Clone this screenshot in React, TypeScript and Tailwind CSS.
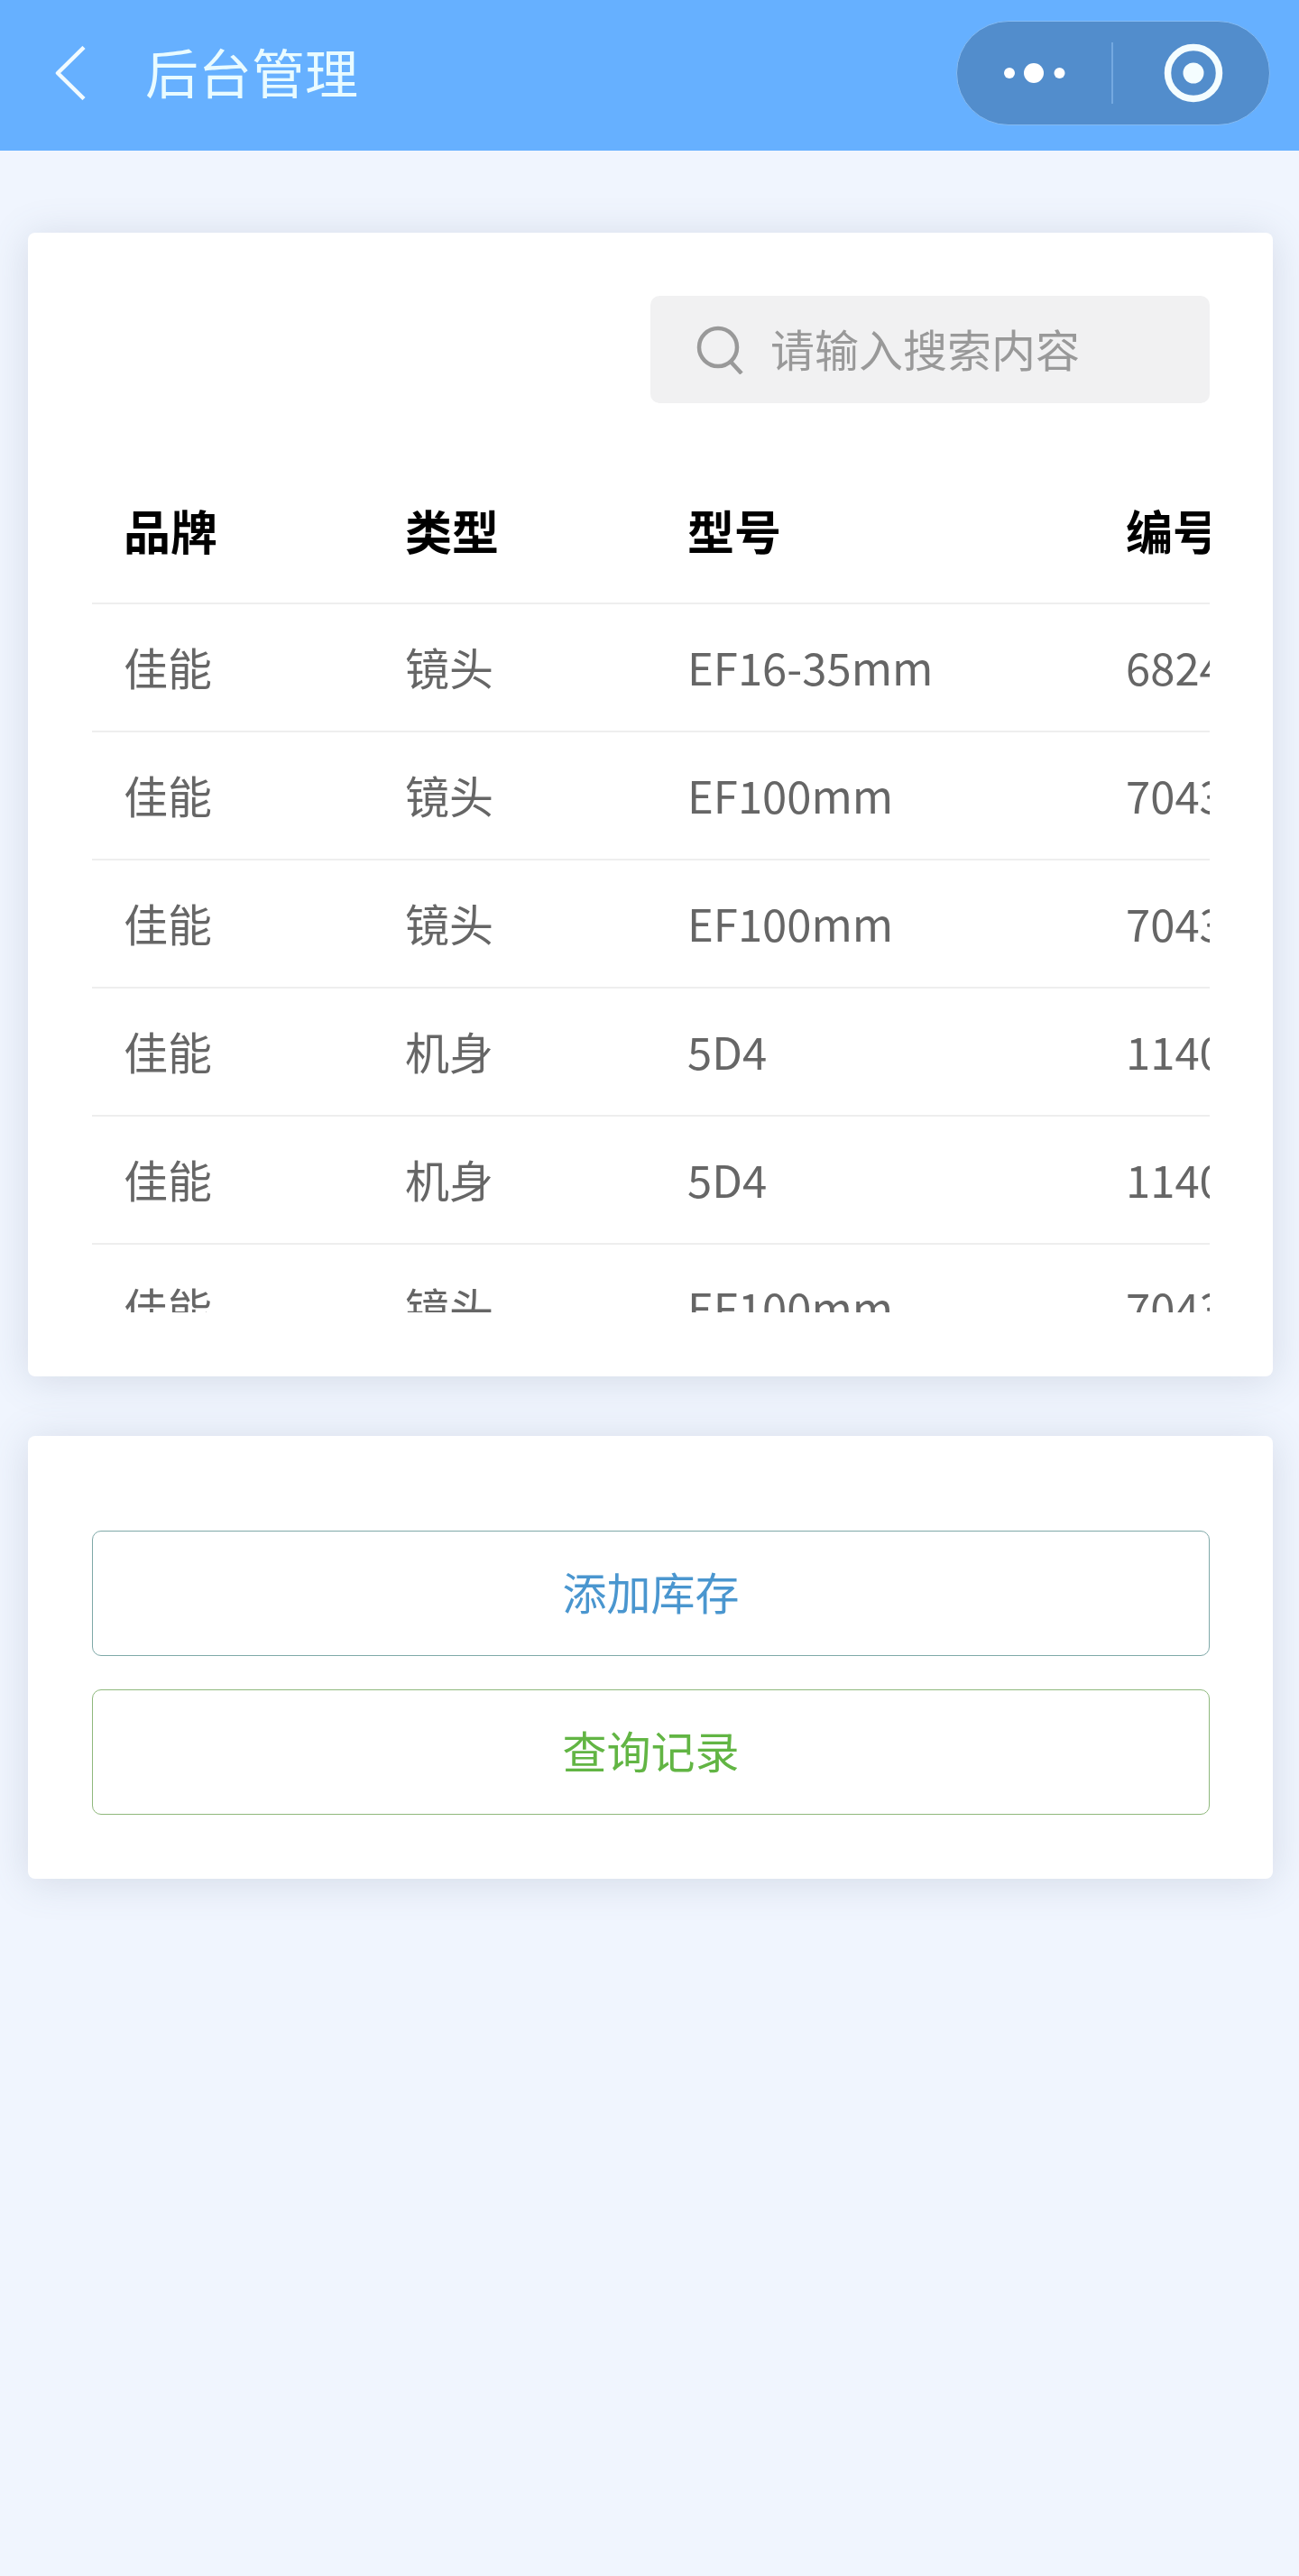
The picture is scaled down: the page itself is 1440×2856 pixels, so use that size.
import React from 'react'

const rows = [
  { brand: '佳能', type: '镜头', model: 'EF16-35mm', code: '682400' },
  { brand: '佳能', type: '镜头', model: 'EF100mm', code: '704300' },
  { brand: '佳能', type: '镜头', model: 'EF100mm', code: '704300' },
  { brand: '佳能', type: '机身', model: '5D4', code: '114000' },
  { brand: '佳能', type: '机身', model: '5D4', code: '114000' },
  { brand: '佳能', type: '镜头', model: 'EF100mm', code: '704300' },
]

const cardClass =
  'ml-[31px] mr-[29px] rounded-[8px] bg-white shadow-[0_4px_44px_rgba(90,105,125,0.19)]'

const Row = ({ cells, head }: { cells: string[]; head?: boolean }) => (
  <div
    className={`flex h-[142px] shrink-0 items-center border-b-[2.5px] border-[#eeeeee] pl-[35px] whitespace-nowrap ${
      head ? 'pb-[20px] text-[52px] font-bold text-black' : 'pb-[2px] text-[49px] text-[#666666]'
    }`}
  >
    <div className="w-[312px] shrink-0">{cells[0]}</div>
    <div className="w-[313px] shrink-0">{cells[1]}</div>
    <div className="w-[486px] shrink-0">{cells[2]}</div>
    <div className="shrink-0">{cells[3]}</div>
  </div>
)

export default function App() {
  return (
    <div className="h-[2856px] w-[1440px] overflow-hidden bg-[#f0f5fe] font-['Noto_Sans_CJK_SC',sans-serif]">
      {/* Nav bar */}
      <div className="flex h-[167px] items-center justify-between bg-[#66b0ff] pr-[32px] pb-[5px] pl-[61px]">
        <div className="flex items-center">
          <svg width="34" height="60" viewBox="0 0 34 60" fill="none">
            <path d="M32 1.5 3 30l29 28.5" stroke="#f2fbff" strokeWidth="4.5" strokeLinejoin="round" />
          </svg>
          <span className="ml-[66px] pb-[5px] text-[59px] leading-none text-[#e9fbff]">后台管理</span>
        </div>

        {/* Capsule */}
        <div className="flex h-[116px] w-[348px] items-center rounded-full border-[1.5px] border-[#84baf2] bg-[#528dcc]">
          <div className="flex w-[171px] items-center justify-center">
            <svg width="68" height="24" viewBox="0 0 68 24" fill="#ffffff">
              <circle cx="6" cy="12" r="6" />
              <circle cx="33" cy="12" r="11" />
              <circle cx="61.5" cy="12" r="6" />
            </svg>
          </div>
          <div className="h-[68px] w-[1.5px] bg-[#74a9e0]" />
          <div className="flex flex-1 items-center justify-center pl-[6px]">
            <svg width="66" height="66" viewBox="0 0 66 66" fill="none">
              <circle cx="33" cy="33" r="28.5" stroke="#f4fdff" strokeWidth="7.5" />
              <circle cx="33" cy="33" r="11.5" fill="#f4fdff" />
            </svg>
          </div>
        </div>
      </div>

      {/* Inventory table */}
      <div className={`${cardClass} mt-[91px] h-[1268px] pt-[70px] pr-[70px] pl-[71px]`}>
        <div className="ml-auto flex h-[119px] w-[620px] items-center rounded-[10px] bg-[#f1f1f2] pl-[51px]">
          <svg width="54" height="54" viewBox="0 0 54 54" fill="none">
            <circle cx="24" cy="24" r="21" stroke="#999999" strokeWidth="4.5" />
            <path d="m38 40 12 13" stroke="#999999" strokeWidth="4.5" />
          </svg>
          <span className="ml-[28px] pb-[4px] text-[49px] leading-none text-[#999999]">请输入搜索内容</span>
        </div>
        <div className="mt-[81px] flex h-[927px] flex-col overflow-hidden">
          <Row head cells={['品牌', '类型', '型号', '编号']} />
          {rows.map((r, i) => (
            <Row key={i} cells={[r.brand, r.type, r.model, r.code]} />
          ))}
        </div>
      </div>

      {/* Actions */}
      <div className={`${cardClass} mt-[66px] h-[491px] pt-[105px] pr-[70px] pl-[71px]`}>
        <button className="flex h-[139px] w-full items-center justify-center rounded-[10px] border-[1.5px] border-[#7fa9a8] pb-[6px] text-[49px] text-[#4a96cf]">
          添加库存
        </button>
        <button className="mt-[37px] flex h-[139px] w-full items-center justify-center rounded-[10px] border-[1.5px] border-[#8fb87c] pb-[6px] text-[49px] text-[#62b544]">
          查询记录
        </button>
      </div>
    </div>
  )
}
